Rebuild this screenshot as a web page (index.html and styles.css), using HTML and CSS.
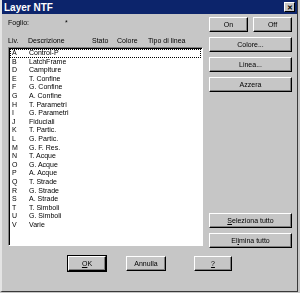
FILE: index.html
```html
<!DOCTYPE html>
<html lang="it">

<head>
    <meta charset="UTF-8">
    <title>Layer NTF</title>
    <link rel="stylesheet" href="styles.css">
</head>

<body>

    <div class="dialog">
        <div class="titlebar">
            <span class="title">Layer NTF</span>
            <span class="close">&#x2715;</span>
        </div>

        <div class="dialog-body">
            <div class="left-side">
                <div class="sheet-row">
                    <span>Foglio:</span>
                    <span class="sheet-value">*</span>
                </div>
                <div class="list-header">
                    <span class="col-liv">Liv.</span>
                    <span class="col-desc">Descrizione</span>
                    <span class="col-stato">Stato</span>
                    <span class="col-colore">Colore</span>
                    <span class="col-tipo">Tipo di linea</span>
                </div>
                <div class="layer-list">
                    <div class="layer-row focused"><span class="col-liv">A</span><span class="col-desc">Control-P</span></div>
                    <div class="layer-row"><span class="col-liv">B</span><span class="col-desc">LatchFrame</span></div>
                    <div class="layer-row"><span class="col-liv">D</span><span class="col-desc">Campiture</span></div>
                    <div class="layer-row"><span class="col-liv">E</span><span class="col-desc">T. Confine</span></div>
                    <div class="layer-row"><span class="col-liv">F</span><span class="col-desc">G. Confine</span></div>
                    <div class="layer-row"><span class="col-liv">G</span><span class="col-desc">A. Confine</span></div>
                    <div class="layer-row"><span class="col-liv">H</span><span class="col-desc">T. Parametri</span></div>
                    <div class="layer-row"><span class="col-liv">I</span><span class="col-desc">G. Parametri</span></div>
                    <div class="layer-row"><span class="col-liv">J</span><span class="col-desc">Fiduciali</span></div>
                    <div class="layer-row"><span class="col-liv">K</span><span class="col-desc">T. Partic.</span></div>
                    <div class="layer-row"><span class="col-liv">L</span><span class="col-desc">G. Partic.</span></div>
                    <div class="layer-row"><span class="col-liv">M</span><span class="col-desc">G. F. Res.</span></div>
                    <div class="layer-row"><span class="col-liv">N</span><span class="col-desc">T. Acque</span></div>
                    <div class="layer-row"><span class="col-liv">O</span><span class="col-desc">G. Acque</span></div>
                    <div class="layer-row"><span class="col-liv">P</span><span class="col-desc">A. Acque</span></div>
                    <div class="layer-row"><span class="col-liv">Q</span><span class="col-desc">T. Strade</span></div>
                    <div class="layer-row"><span class="col-liv">R</span><span class="col-desc">G. Strade</span></div>
                    <div class="layer-row"><span class="col-liv">S</span><span class="col-desc">A. Strade</span></div>
                    <div class="layer-row"><span class="col-liv">T</span><span class="col-desc">T. Simboli</span></div>
                    <div class="layer-row"><span class="col-liv">U</span><span class="col-desc">G. Simboli</span></div>
                    <div class="layer-row"><span class="col-liv">V</span><span class="col-desc">Varie</span></div>
                </div>
            </div>

            <div class="right-side">
                <div class="btn-pair">
                    <button class="btn">On</button>
                    <button class="btn">Off</button>
                </div>
                <button class="btn">Colore...</button>
                <button class="btn">Linea...</button>
                <button class="btn">Azzera</button>
                <div class="spacer"></div>
                <button class="btn"><u>S</u>eleziona tutto</button>
                <button class="btn">El<u>i</u>mina tutto</button>
            </div>
        </div>

        <div class="bottom-row">
            <button class="btn btn-small default"><u>O</u>K</button>
            <button class="btn btn-small">Annulla</button>
            <button class="btn btn-small"><u>?</u></button>
        </div>
    </div>

</body>

</html>
```

FILE: styles.css
```css
* {
    padding: 0;
    margin: 0;
    box-sizing: border-box;
}

body {
    background-color: #c6c6c6;
    font-family: 'Liberation Sans', Arial, sans-serif;
    font-size: 7px;
    color: #000;
    width: 300px;
    height: 293px;
    overflow: hidden;
}

.dialog {
    width: 298px;
    height: 292px;
    background-color: #c6c6c6;
    border-left: 2px solid #e4e4e4;
    border-right: 1px solid #3a3a3a;
    border-bottom: 1px solid #3a3a3a;
    display: flex;
    flex-direction: column;
}

/* small text gets colour fringes otherwise */
.dialog-body,
.bottom-row {
    filter: grayscale(1);
}

.titlebar {
    height: 14px;
    background-color: #0c246b;
    color: #fff;
    display: flex;
    align-items: center;
    justify-content: space-between;
    padding: 0 2px 0 2px;
}

.title {
    font-weight: bold;
    font-size: 10px;
}

.close {
    width: 11px;
    height: 10px;
    background-color: #c6c6c6;
    color: #000;
    font-size: 7px;
    font-weight: bold;
    line-height: 10px;
    text-align: center;
    border-top: 1px solid #fff;
    border-left: 1px solid #fff;
    border-right: 1px solid #000;
    border-bottom: 1px solid #000;
}

.dialog-body {
    display: flex;
    padding: 3px 0 0 6px;
}

.left-side {
    width: 195px;
}

.sheet-row {
    height: 10px;
    line-height: 10px;
    margin-top: 1px;
}

.sheet-value {
    margin-left: 34px;
}

.list-header {
    display: flex;
    height: 10px;
    line-height: 10px;
    margin-top: 8px;
    margin-bottom: 1px;
}

.col-liv {
    width: 20px;
}

.col-desc {
    width: 64px;
}

.col-stato {
    width: 25px;
}

.col-colore {
    width: 31px;
}

.layer-list {
    height: 199px;
    background: #fff;
    border-top: 1px solid #808080;
    border-left: 1px solid #808080;
    border-right: 1px solid #fff;
    border-bottom: 1px solid #fff;
    box-shadow: inset 1px 1px 0 #000;
    padding: 1px 1px 0 1px;
}

.layer-row {
    display: flex;
    height: 8.6px;
    line-height: 8.6px;
}

.layer-row .col-liv {
    padding-left: 2px;
    width: 19px;
}

.focused {
    outline: 1px dotted #000;
    outline-offset: -1px;
}

.right-side {
    width: 83px;
    margin-left: 6px;
    display: flex;
    flex-direction: column;
    gap: 5px;
    height: 231px;
}

.btn-pair {
    display: flex;
    justify-content: space-between;
}

.btn-pair .btn {
    width: 39px;
}

.btn {
    font-family: inherit;
    font-size: 7px;
    height: 15px;
    background: #c6c6c6;
    color: #000;
    border-top: 1px solid #fff;
    border-left: 1px solid #fff;
    border-right: 1px solid #000;
    border-bottom: 1px solid #000;
    box-shadow: inset -1px -1px 0 #808080;
}

.spacer {
    flex: 1;
}

.bottom-row {
    display: flex;
    padding-left: 66px;
    margin-top: 8px;
}

.btn-small {
    width: 38px;
    margin-right: 20px;
}

.btn-small:nth-child(2) {
    width: 40px;
    margin-right: 28px;
}

.default {
    outline: 1px solid #000;
}
```
